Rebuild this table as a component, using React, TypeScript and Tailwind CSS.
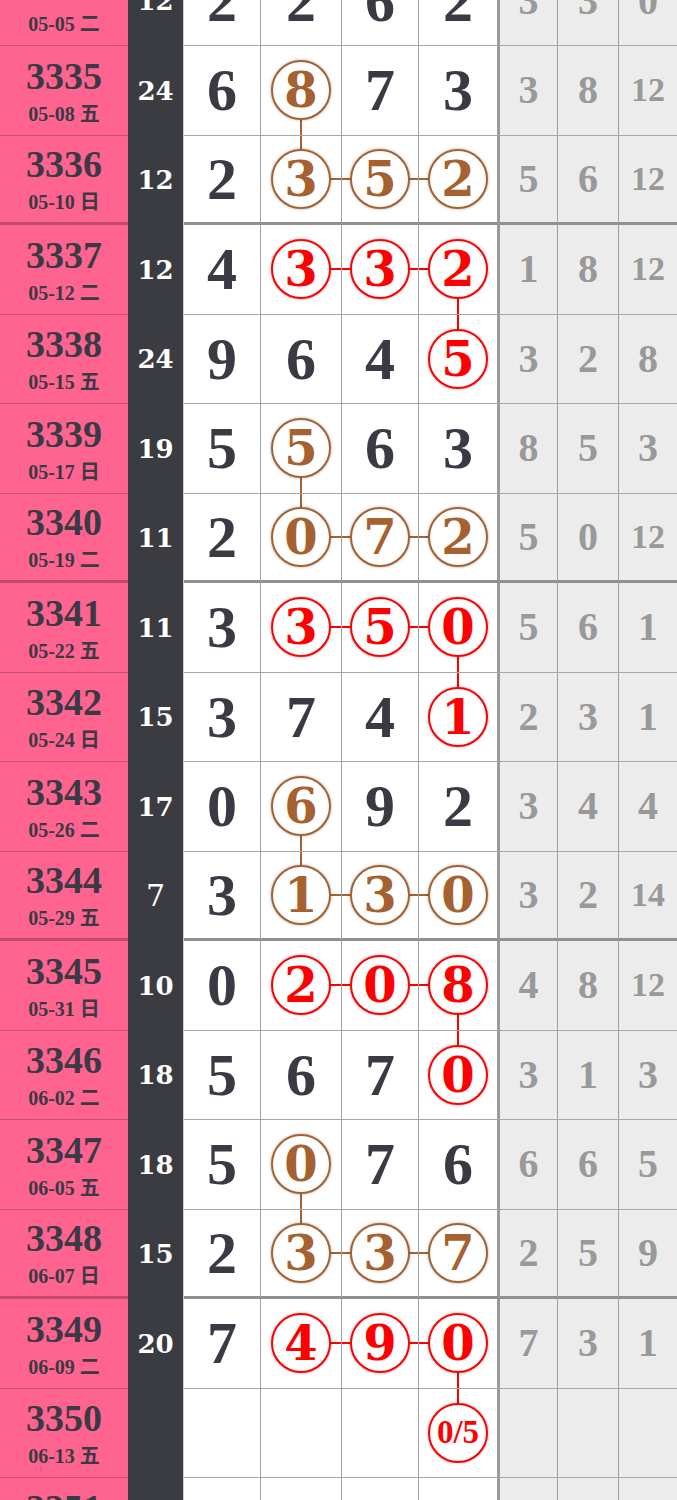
import React from "react";

type Row = {
  no: string;
  date: string;
  sum: string;
  nums: string[];
  gaps: string[];
  circles?: number[];
  red?: boolean;
  up?: number;
  down?: number;
  end?: boolean;
};

const rows: Row[] = [
  { no: "3334", date: "05-05 二", sum: "12", nums: ["2", "2", "6", "2"], gaps: ["3", "3", "0"] },
  { no: "3335", date: "05-08 五", sum: "24", nums: ["6", "8", "7", "3"], gaps: ["3", "8", "12"], circles: [1], down: 1 },
  { no: "3336", date: "05-10 日", sum: "12", nums: ["2", "3", "5", "2"], gaps: ["5", "6", "12"], circles: [1, 2, 3], up: 1, end: true },
  { no: "3337", date: "05-12 二", sum: "12", nums: ["4", "3", "3", "2"], gaps: ["1", "8", "12"], circles: [1, 2, 3], red: true, down: 3 },
  { no: "3338", date: "05-15 五", sum: "24", nums: ["9", "6", "4", "5"], gaps: ["3", "2", "8"], circles: [3], red: true, up: 3 },
  { no: "3339", date: "05-17 日", sum: "19", nums: ["5", "5", "6", "3"], gaps: ["8", "5", "3"], circles: [1], down: 1 },
  { no: "3340", date: "05-19 二", sum: "11", nums: ["2", "0", "7", "2"], gaps: ["5", "0", "12"], circles: [1, 2, 3], up: 1, end: true },
  { no: "3341", date: "05-22 五", sum: "11", nums: ["3", "3", "5", "0"], gaps: ["5", "6", "1"], circles: [1, 2, 3], red: true, down: 3 },
  { no: "3342", date: "05-24 日", sum: "15", nums: ["3", "7", "4", "1"], gaps: ["2", "3", "1"], circles: [3], red: true, up: 3 },
  { no: "3343", date: "05-26 二", sum: "17", nums: ["0", "6", "9", "2"], gaps: ["3", "4", "4"], circles: [1], down: 1 },
  { no: "3344", date: "05-29 五", sum: "7", nums: ["3", "1", "3", "0"], gaps: ["3", "2", "14"], circles: [1, 2, 3], up: 1, end: true },
  { no: "3345", date: "05-31 日", sum: "10", nums: ["0", "2", "0", "8"], gaps: ["4", "8", "12"], circles: [1, 2, 3], red: true, down: 3 },
  { no: "3346", date: "06-02 二", sum: "18", nums: ["5", "6", "7", "0"], gaps: ["3", "1", "3"], circles: [3], red: true, up: 3 },
  { no: "3347", date: "06-05 五", sum: "18", nums: ["5", "0", "7", "6"], gaps: ["6", "6", "5"], circles: [1], down: 1 },
  { no: "3348", date: "06-07 日", sum: "15", nums: ["2", "3", "3", "7"], gaps: ["2", "5", "9"], circles: [1, 2, 3], up: 1, end: true },
  { no: "3349", date: "06-09 二", sum: "20", nums: ["7", "4", "9", "0"], gaps: ["7", "3", "1"], circles: [1, 2, 3], red: true, down: 3 },
  { no: "3350", date: "06-13 五", sum: "", nums: ["", "", "", "0/5"], gaps: ["", "", ""], circles: [3], red: true, up: 3 },
  { no: "3351", date: "06-16 日", sum: "", nums: ["", "", "", ""], gaps: ["", "", ""] },
];

const serif = "font-['Liberation_Serif','Noto_Sans_CJK_SC',serif]";
const dejavu = "font-['DejaVu_Serif','Liberation_Serif',serif]";

const Ball = ({ value, red }: { value: string; red?: boolean }) => (
  <div
    className={`relative z-10 flex h-[60px] w-[60px] items-center justify-center rounded-full bg-white shadow-[0_0_3px_rgba(0,0,0,0.35)] ${
      red ? "border-[2.5px] border-[#ff0000] text-[#ff0000]" : "border-2 border-[#a5612f] text-[#a5612f]"
    }`}
  >
    {value.includes("/") ? (
      <span className={`${serif} text-[33px] font-bold leading-none`}>{value}</span>
    ) : (
      <span className={`${dejavu} text-[48px] font-bold leading-none`}>{value}</span>
    )}
  </div>
);

const NumCell = ({ row, i }: { row: Row; i: number }) => {
  const circled = row.circles?.includes(i);
  const line = row.red ? "bg-[#ff0000]" : "bg-[#a5612f]";
  const bottom = row.end ? "border-b-[3px] border-b-[#909090]" : "border-b border-b-[#a8a8a8]";
  const right = i === 3 ? "border-r-[3px] border-r-[#9a9a9a]" : "border-r border-r-[#a0a0a0]";
  return (
    <div className={`relative flex items-center justify-center bg-white ${bottom} ${right}`}>
      {circled && row.circles!.includes(i - 1) && (
        <div className={`absolute left-0 top-1/2 h-[2px] w-1/2 -translate-y-1/2 ${line}`} />
      )}
      {circled && row.circles!.includes(i + 1) && (
        <div className={`absolute right-0 top-1/2 h-[2px] w-1/2 -translate-y-1/2 ${line}`} />
      )}
      {circled && row.up === i && (
        <div className={`absolute left-1/2 top-0 h-1/2 w-[2px] -translate-x-1/2 ${line}`} />
      )}
      {circled && row.down === i && (
        <div className={`absolute bottom-0 left-1/2 h-1/2 w-[2px] -translate-x-1/2 ${line}`} />
      )}
      {circled ? (
        <Ball value={row.nums[i]} red={row.red} />
      ) : (
        <span className={`${serif} text-[60px] font-bold leading-none text-[#3a3a44]`}>{row.nums[i]}</span>
      )}
    </div>
  );
};

const TableRow = ({ row }: { row: Row }) => {
  const bottom = row.end ? "border-b-[3px] border-b-[#909090]" : "border-b border-b-[#a8a8a8]";
  const pinkBottom = row.end ? "border-b-[3px] border-b-[#c24a6a]" : "border-b border-b-[#c9536f]";
  return (
    <div className="grid h-[89.5px] grid-cols-[128px_56px_77px_81px_77px_81px_58px_61px_58px]">
      <div className={`flex flex-col items-center justify-center bg-[#ff6490] text-[#3a3a44] ${serif} ${pinkBottom}`}>
        <div className="text-[38px] font-bold leading-none">{row.no}</div>
        <div className="mt-[9px] text-[20px] font-bold leading-none">{row.date}</div>
      </div>
      <div className="flex items-center justify-center border-r border-r-[#d0d0d0] bg-[#3b3b42] text-white">
        {row.sum.length === 1 ? (
          <span className={`${dejavu} text-[30px] leading-none`}>{row.sum}</span>
        ) : (
          <span className={`${dejavu} text-[26px] font-bold leading-none`}>{row.sum}</span>
        )}
      </div>
      {[0, 1, 2, 3].map((i) => (
        <NumCell key={i} row={row} i={i} />
      ))}
      {row.gaps.map((g, i) => (
        <div
          key={i}
          className={`flex items-center justify-center bg-[#ececec] text-[#999999] ${serif} ${bottom} ${
            i < 2 ? "border-r border-r-[#a0a0a0]" : ""
          }`}
        >
          <span className={`${g.length > 1 ? "text-[34px]" : "text-[40px]"} font-bold leading-none`}>{g}</span>
        </div>
      ))}
    </div>
  );
};

export default function App() {
  return (
    <div className="h-[1500px] w-[677px] overflow-hidden bg-white">
      <div className="-mt-[43.5px]">
        {rows.map((row) => (
          <TableRow key={row.no} row={row} />
        ))}
      </div>
    </div>
  );
}
